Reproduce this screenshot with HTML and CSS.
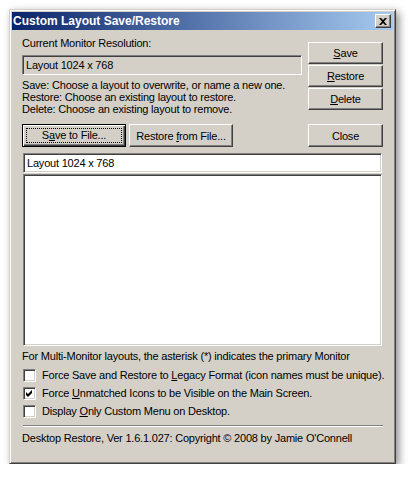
FILE: index.html
```html
<!DOCTYPE html>
<html lang="en">
<head>
  <meta charset="UTF-8">
  <title>Custom Layout Save/Restore</title>
  <link rel="stylesheet" href="styles.css">
</head>
<body>

  <div class="ventana">
    <div class="titulo">
      <span>Custom Layout Save/Restore</span>
      <button class="cerrar-x" title="Close">
        <svg width="8" height="7" viewBox="0 0 8 7"><path d="M0 0h2l2 2 2-2h2L5 3.5 8 7H6L4 5 2 7H0l3-3.5z" fill="#000"/></svg>
      </button>
    </div>

    <div class="contenido">
      <div class="arriba">
        <div class="izq">
          <div class="etiqueta">Current Monitor Resolution:</div>
          <div class="campo campo-gris">Layout 1024 x 768</div>
          <div class="ayuda">
            Save: Choose a layout to overwrite, or name a new one.<br>
            Restore: Choose an existing layout to restore.<br>
            Delete: Choose an existing layout to remove.
          </div>
          <div class="fila-archivo">
            <button class="boton boton-def btn-guardar-archivo"><span class="foco">S<u>a</u>ve to File...</span></button>
            <button class="boton btn-restaurar-archivo">Restore <u>f</u>rom File...</button>
          </div>
        </div>

        <div class="der">
          <button class="boton"><u>S</u>ave</button>
          <button class="boton"><u>R</u>estore</button>
          <button class="boton"><u>D</u>elete</button>
          <button class="boton btn-cerrar">Close</button>
        </div>
      </div>

      <div class="campo campo-nombre">Layout 1024 x 768</div>
      <div class="lista" id="lista"></div>

      <div class="nota">For Multi-Monitor layouts, the asterisk (*) indicates the primary Monitor</div>

      <label class="opcion">
        <span class="casilla"></span>
        <span>Force Save and Restore to <u>L</u>egacy Format (icon names must be unique).</span>
      </label>
      <label class="opcion">
        <span class="casilla">
          <svg width="7" height="7" viewBox="0 0 7 7"><polygon points="0,2 2,4 6,0 6,3 2,7 0,5" fill="#000"/></svg>
        </span>
        <span>Force <u>U</u>nmatched Icons to be Visible on the Main Screen.</span>
      </label>
      <label class="opcion">
        <span class="casilla"></span>
        <span>Display <u>O</u>nly Custom Menu on Desktop.</span>
      </label>

      <div class="separador"></div>
      <div class="pie">Desktop Restore, Ver 1.6.1.027: Copyright &copy; 2008 by Jamie O'Connell</div>
    </div>
  </div>

</body>
</html>
```

FILE: styles.css
```css
* {
  box-sizing: border-box;
}

body {
  margin: 0;
  background: #ffffff;
  font-family: 'Liberation Sans', Arial, sans-serif;
  font-size: 11px;
  letter-spacing: -0.2px;
  color: #000;
}

u {
  text-decoration: underline;
  text-underline-offset: 1px;
}

/* ventana clásica con bisel y sombra */
.ventana {
  margin: 9px 0 0 9px;
  width: 387px;
  height: 455px;
  background: #d4d0c8;
  border: 1px solid;
  border-color: #d4d0c8 #404040 #404040 #d4d0c8;
  box-shadow: inset 1px 1px #ffffff, inset -1px -1px #808080, 3px 3px 8px rgba(0, 0, 0, 0.45);
  padding: 2px;
}

.titulo {
  height: 18px;
  background: linear-gradient(to right, #0a246a, #a6caf0);
  color: #fff;
  font-weight: bold;
  font-size: 12px;
  letter-spacing: 0;
  display: flex;
  align-items: center;
  justify-content: space-between;
  padding: 0 2px 0 1px;
}

.cerrar-x {
  width: 16px;
  height: 14px;
  padding: 0;
  background: #d4d0c8;
  border: 1px solid;
  border-color: #fff #404040 #404040 #fff;
  box-shadow: inset -1px -1px #808080;
  display: flex;
  align-items: center;
  justify-content: center;
}

.contenido {
  padding: 7px 10px 0 10px;
  line-height: 13px;
}

.arriba {
  display: flex;
  gap: 6px;
}

.izq {
  width: 280px;
}

.der {
  width: 75px;
  display: flex;
  flex-direction: column;
  gap: 1px;
  padding-top: 5px;
}

.campo {
  border: 1px solid;
  border-color: #808080 #fff #fff #808080;
  box-shadow: inset 1px 1px #404040, inset -1px -1px #d4d0c8;
  padding: 3px 3px;
  height: 20px;
}

.campo-gris {
  margin-top: 5px;
  background: #d4d0c8;
}

.ayuda {
  margin-top: 4px;
  line-height: 12px;
}

.fila-archivo {
  display: flex;
  gap: 3px;
  margin-top: 9px;
}

.boton {
  font-family: inherit;
  font-size: 11px;
  letter-spacing: -0.2px;
  color: #000;
  background: #d4d0c8;
  height: 23px;
  padding: 0;
  border: 1px solid;
  border-color: #fff #404040 #404040 #fff;
  box-shadow: inset -1px -1px #808080, inset 1px 1px #d4d0c8;
}

.boton-def {
  border: 1px solid #000;
  box-shadow: inset 1px 1px #fff, inset -1px -1px #404040, inset -2px -2px #808080;
}

.foco {
  display: block;
  margin: 3px;
  border: 1px dotted #000;
  line-height: 13px;
}

.btn-guardar-archivo {
  width: 104px;
}

.btn-restaurar-archivo {
  width: 104px;
}

.der .boton {
  height: 22px;
}

.der .btn-cerrar {
  margin-top: auto;
  height: 23px;
}

.campo-nombre {
  margin: 6px 1px 0 1px;
  background: #fff;
  padding: 3px 3px;
}

.lista {
  margin: 1px 1px 0 1px;
  height: 172px;
  background: #fff;
  border: 1px solid;
  border-color: #808080 #fff #fff #808080;
  box-shadow: inset 1px 1px #404040, inset -1px -1px #d4d0c8;
}

.nota {
  margin-top: 4px;
}

.opcion {
  display: flex;
  align-items: center;
  gap: 6px;
  height: 17px;
  padding-left: 1px;
  white-space: nowrap;
}

.nota + .opcion {
  margin-top: 4px;
}

.opcion + .opcion {
  margin-top: 1px;
}

.casilla {
  width: 13px;
  height: 13px;
  flex: none;
  background: #fff;
  border: 1px solid;
  border-color: #808080 #fff #fff #808080;
  box-shadow: inset 1px 1px #404040, inset -1px -1px #d4d0c8;
  display: flex;
  align-items: center;
  justify-content: center;
}

.separador {
  margin: 5px 0 0 1px;
  border-top: 1px solid #808080;
  border-bottom: 1px solid #fff;
}

.pie {
  margin-top: 5px;
}
```
